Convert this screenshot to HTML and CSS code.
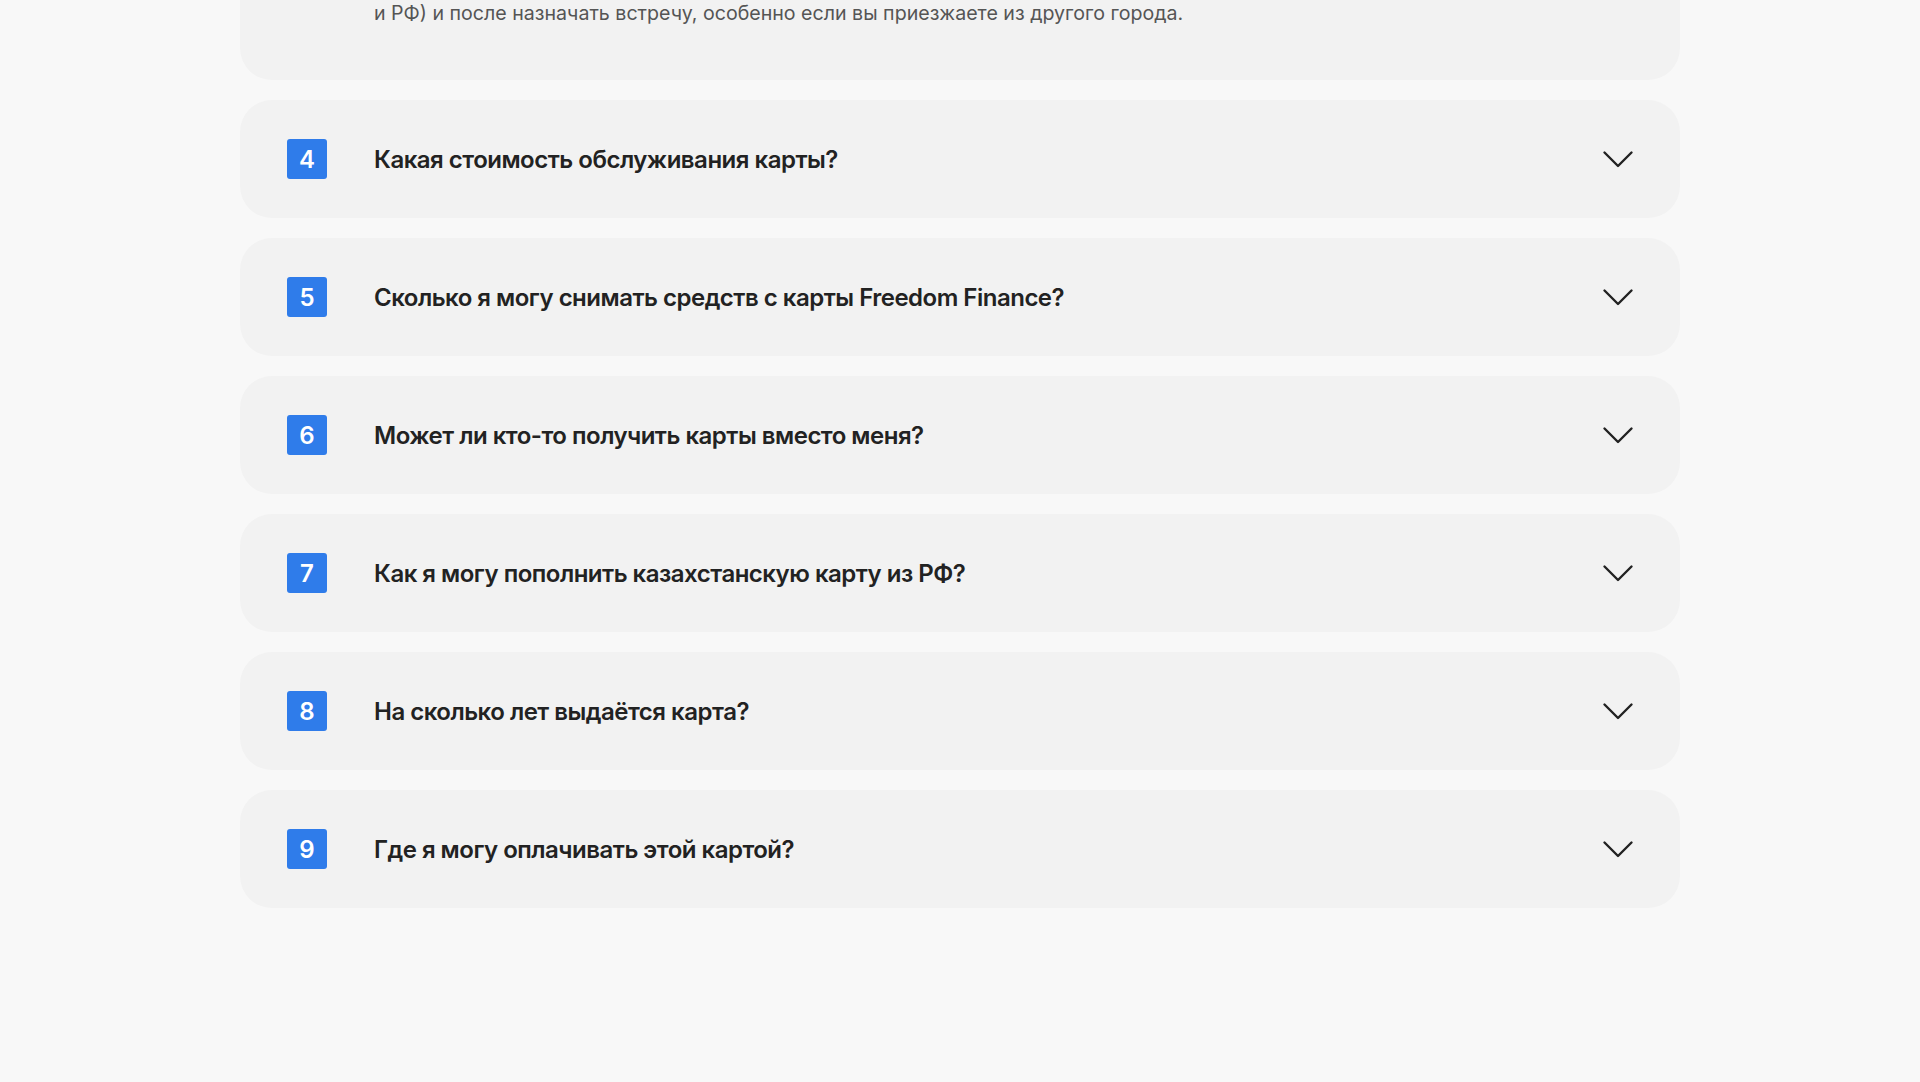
FILE: index.html
```html
<!DOCTYPE html>
<html lang="ru">
<head>
<meta charset="utf-8">
<title>FAQ</title>
<link rel="stylesheet" href="styles.css">
</head>
<body>
<main class="faq">
  <div class="card card-open">
    <p class="answer">и РФ) и после назначать встречу, особенно если вы приезжаете из другого города.</p>
  </div>
  <div class="card">
    <span class="num">4</span>
    <span class="q">Какая стоимость обслуживания карты?</span>
    <svg class="chev" viewBox="0 0 32 32" width="32" height="32"><path d="M2.5 9.5 L16 23 L29.5 9.5"/></svg>
  </div>
  <div class="card">
    <span class="num">5</span>
    <span class="q">Сколько я могу снимать средств с карты Freedom Finance?</span>
    <svg class="chev" viewBox="0 0 32 32" width="32" height="32"><path d="M2.5 9.5 L16 23 L29.5 9.5"/></svg>
  </div>
  <div class="card">
    <span class="num">6</span>
    <span class="q">Может ли кто-то получить карты вместо меня?</span>
    <svg class="chev" viewBox="0 0 32 32" width="32" height="32"><path d="M2.5 9.5 L16 23 L29.5 9.5"/></svg>
  </div>
  <div class="card">
    <span class="num">7</span>
    <span class="q">Как я могу пополнить казахстанскую карту из РФ?</span>
    <svg class="chev" viewBox="0 0 32 32" width="32" height="32"><path d="M2.5 9.5 L16 23 L29.5 9.5"/></svg>
  </div>
  <div class="card">
    <span class="num">8</span>
    <span class="q">На сколько лет выдаётся карта?</span>
    <svg class="chev" viewBox="0 0 32 32" width="32" height="32"><path d="M2.5 9.5 L16 23 L29.5 9.5"/></svg>
  </div>
  <div class="card">
    <span class="num">9</span>
    <span class="q">Где я могу оплачивать этой картой?</span>
    <svg class="chev" viewBox="0 0 32 32" width="32" height="32"><path d="M2.5 9.5 L16 23 L29.5 9.5"/></svg>
  </div>
</main>
</body>
</html>
```
FILE: styles.css
```css
html, body {
  margin: 0;
  padding: 0;
  background: #f8f8f8;
  font-family: Inter, "Noto Sans", sans-serif;
  color: #222;
}
.faq {
  width: 1440px;
  margin: 0 auto;
  display: flex;
  flex-direction: column;
  gap: 20px;
}
.card {
  background: #f2f2f2;
  border-radius: 32px;
  height: 118px;
  box-sizing: border-box;
  padding: 0 46px 0 47px;
  display: flex;
  align-items: center;
}
.card-open {
  height: 80px;
  border-radius: 0 0 32px 32px;
  align-items: flex-start;
  padding-left: 134px;
}
.answer {
  margin: 0;
  font-size: 19.6px;
  line-height: 26px;
  color: #555;
  font-weight: 400;
}
.num {
  width: 40px;
  height: 40px;
  border-radius: 3px;
  background: #2f7cea;
  color: #fff;
  font-size: 24px;
  font-weight: 600;
  display: flex;
  align-items: center;
  justify-content: center;
  flex: none;
}
.q {
  margin-left: 47px;
  font-size: 24px;
  font-weight: 600;
  flex: 1;
  letter-spacing: -0.5px;
}
.chev {
  flex: none;
  fill: none;
  stroke: #222;
  stroke-width: 2.4;
  stroke-linecap: round;
  stroke-linejoin: round;
}
```
